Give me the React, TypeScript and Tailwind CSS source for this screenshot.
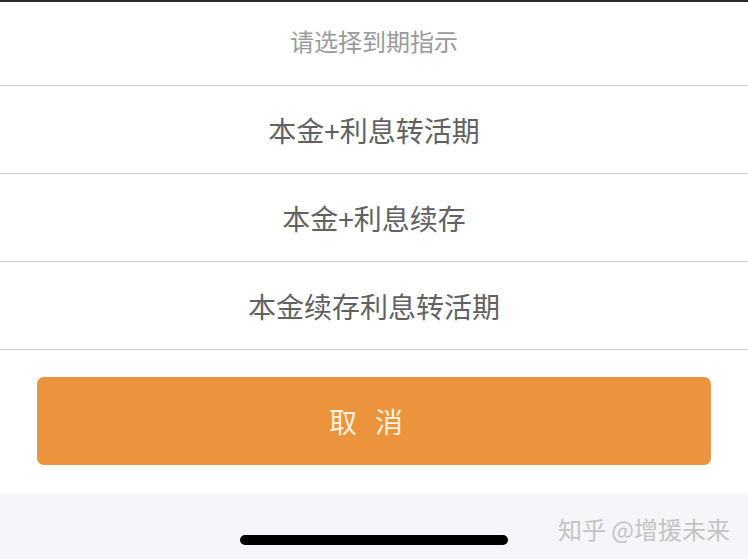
import React from 'react';

const options = ['本金+利息转活期', '本金+利息续存', '本金续存利息转活期'];

export default function App() {
  return (
    <div
      className="w-[748px] h-[559px] flex flex-col bg-white overflow-hidden"
      style={{ fontFamily: '"Noto Sans CJK SC", "Noto Sans", sans-serif' }}
    >
      <div className="h-[2px] bg-[#2a2a2a]" />
      <div className="h-[84px] flex items-center justify-center pb-[5px] border-b border-[#d4d4d4] text-[24px] text-[#9a9a9a]">
        请选择到期指示
      </div>
      {options.map((o) => (
        <div
          key={o}
          className="h-[88px] flex items-center justify-center border-b border-[#d4d4d4] text-[28px] text-[#616161]"
        >
          {o}
        </div>
      ))}
      <div className="px-[37px] pt-[27px] pb-[28px]">
        <button className="w-full h-[88px] rounded-[7px] bg-[#ec943d] text-[28px] text-[#fdf1dc] pr-[16px]">
          取<span className="ml-[18px]">消</span>
        </button>
      </div>
      <div className="flex-1 bg-[#f5f6f9] relative">
        <div className="absolute right-[18px] top-[18px] text-[24px] text-[#c4c4c4]">知乎 @增援未来</div>
        <div className="absolute left-[240px] top-[42px] w-[268px] h-[10px] rounded-full bg-black" />
      </div>
    </div>
  );
}
